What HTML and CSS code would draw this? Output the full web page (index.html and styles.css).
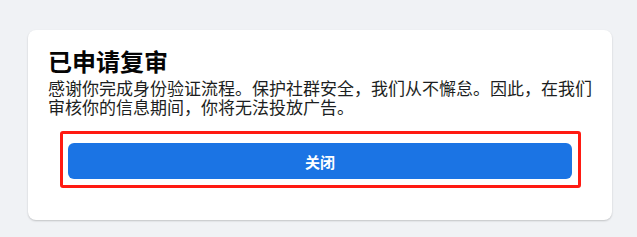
FILE: index.html
```html
<!DOCTYPE html>
<html lang="zh-CN">
<head>
    <meta charset="UTF-8">
    <meta name="viewport" content="width=device-width, initial-scale=1.0">
    <title>已申请复审</title>
    <link rel="stylesheet" href="styles.css">
</head>
<body>

<div class="review-card">
    <h2>已申请复审</h2>
    <p class="review-text">感谢你完成身份验证流程。保护社群安全，我们从不懈怠。因此，在我们审核你的信息期间，你将无法投放广告。</p>
    <div class="highlight">
        <button class="close-btn">关闭</button>
    </div>
</div>

</body>
</html>
```

FILE: styles.css
```css
body {
    margin: 0;
    padding: 30px 25px 18px 28px;
    background-color: #f0f2f5;
    font-family: "Noto Sans CJK SC", "Noto Sans", sans-serif;
    color: #1c1e21;
}
.review-card {
    width: 584px;
    box-sizing: border-box;
    padding: 15px 20px 32px;
    background-color: #fff;
    border-radius: 8px;
    box-shadow: 0 1px 2px rgba(0, 0, 0, 0.2);
}
h2 {
    margin: 0;
    font-size: 24px;
    line-height: 32px;
    font-weight: 700;
    color: #050505;
}
.review-text {
    margin: 1px 0 15px;
    font-size: 17px;
    line-height: 19px;
}
/* red highlight box around the button */
.highlight {
    margin: 0 11px 0 12px;
    padding: 9px 6px 6px 5px;
    border: 3px solid #ff1a12;
    border-radius: 3px;
}
.close-btn {
    display: block;
    width: 100%;
    height: 36px;
    border: none;
    border-radius: 6px;
    background-color: #1b74e4;
    color: #fff;
    font-family: inherit;
    font-size: 15px;
    font-weight: 700;
    cursor: pointer;
}
```
